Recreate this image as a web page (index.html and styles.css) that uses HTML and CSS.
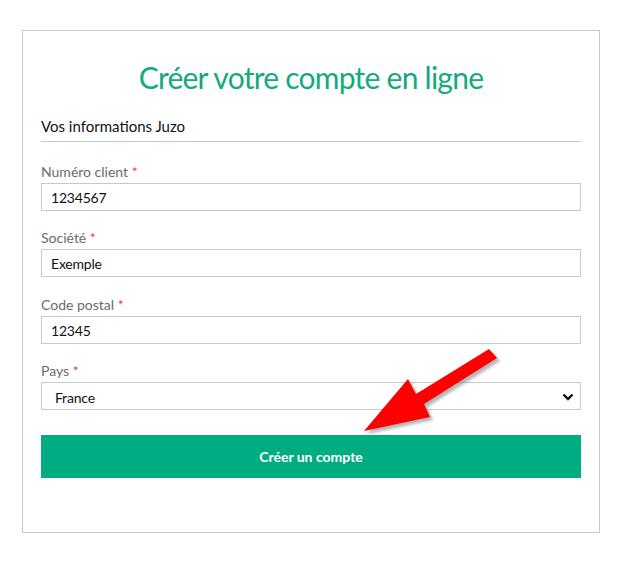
FILE: index.html
```html
<!DOCTYPE html>
<html lang="fr">
<head>
<meta charset="utf-8">
<title>Créer votre compte en ligne</title>
<link rel="stylesheet" href="styles.css">
</head>
<body>
<div class="card">
  <h1 class="title">Créer votre compte en ligne</h1>
  <h2 class="section">Vos informations Juzo</h2>
  <form class="form">
    <div class="field">
      <label class="label">Numéro client <span class="req">*</span></label>
      <div class="input">1234567</div>
    </div>
    <div class="field">
      <label class="label">Société <span class="req">*</span></label>
      <div class="input">Exemple</div>
    </div>
    <div class="field">
      <label class="label">Code postal <span class="req">*</span></label>
      <div class="input">12345</div>
    </div>
    <div class="field">
      <label class="label">Pays <span class="req">*</span></label>
      <div class="input select">France
        <svg class="chev" width="12" height="8" viewBox="0 0 12 8"><path d="M1.5 1.5 L6 6 L10.5 1.5" fill="none" stroke="#111" stroke-width="2.4"/></svg>
      </div>
    </div>
    <div class="button">Créer un compte</div>
  </form>
</div>
<svg class="arrow" width="626" height="568" viewBox="0 0 626 568">
  <defs>
    <filter id="sh" x="-20%" y="-20%" width="140%" height="140%">
      <feGaussianBlur stdDeviation="1.6"/>
    </filter>
  </defs>
  <polygon points="489,349 497,358 424,404 430,417 364,431 408,379 416,394" fill="#777" opacity="0.55" transform="translate(3,3)" filter="url(#sh)"/>
  <polygon points="489,349 497,358 424,404 430,417 364,431 408,379 416,394" fill="#ff0000"/>
</svg>
</body>
</html>
```
FILE: styles.css
```css
html, body {
  margin: 0;
  padding: 0;
  background: #fff;
}
body {
  font-family: Lato, "Liberation Sans", sans-serif;
  position: relative;
  width: 626px;
  height: 568px;
  overflow: hidden;
}
.card {
  box-sizing: border-box;
  margin: 30px 0 0 22px;
  width: 578px;
  height: 503px;
  border: 1px solid #c9c9c9;
  padding: 0 18px;
}
.title {
  margin: 28px 0 0;
  text-align: center;
  font-weight: 400;
  font-size: 30px;
  line-height: 36px;
  letter-spacing: -0.75px;
  color: #14a97e;
}
.section {
  margin: 21px 0 0;
  padding-bottom: 5px;
  border-bottom: 1px solid #c9c9c9;
  font-weight: 400;
  font-size: 15px;
  line-height: 20px;
  color: #111;
}
.form {
  display: flex;
  flex-direction: column;
  margin-top: 20px;
}
.field {
  display: flex;
  flex-direction: column;
  margin-bottom: 17.35px;
}
.label {
  font-size: 14px;
  line-height: 20px;
  color: #6b6b6b;
  margin-bottom: 1px;
}
.req {
  color: #e2445c;
}
.input {
  box-sizing: border-box;
  height: 28px;
  border: 1px solid #c9c9c9;
  padding: 0 9px;
  font-size: 14px;
  line-height: 27px;
  letter-spacing: -0.2px;
  color: #111;
}
.select {
  position: relative;
  padding-left: 13px;
  line-height: 30px;
}
.chev {
  position: absolute;
  right: 6px;
  top: 10px;
}
.button {
  margin-top: 7.65px;
  height: 43px;
  background: #00ac82;
  color: #fff;
  font-size: 14px;
  font-weight: 700;
  line-height: 43px;
  text-align: center;
}
.arrow {
  position: absolute;
  left: 0;
  top: 0;
  pointer-events: none;
}
```
